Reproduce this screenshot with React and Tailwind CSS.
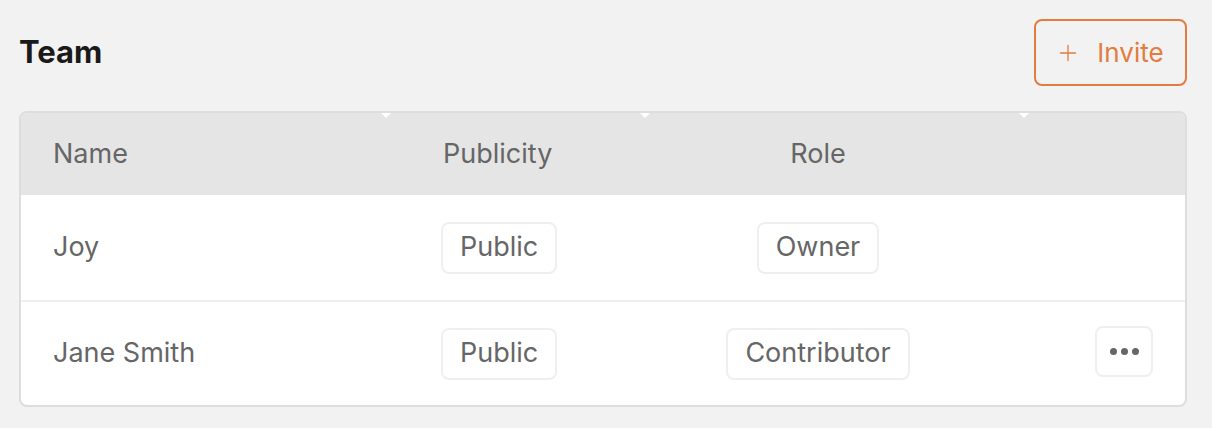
import { Plus } from 'lucide-react';

const members = [
    { name: 'Joy', publicity: 'Public', role: 'Owner', canEdit: false },
    { name: 'Jane Smith', publicity: 'Public', role: 'Contributor', canEdit: true },
];

function Tag({ children }) {
    return (
        <span className="inline-flex h-[52px] items-center rounded-[8px] border-2 border-[#efefef] bg-white px-[17px] text-[27px] text-[#666]">
            {children}
        </span>
    );
}

function ColumnMark({ className }) {
    // little resize notch at the top of the header
    return (
        <span
            className={`absolute top-0 h-0 w-0 border-x-[5px] border-t-[5px] border-x-transparent border-t-white ${className}`}
        />
    );
}

function App() {
    return (
        <div
            className="min-h-screen bg-[#f2f2f2] pl-[19px] pr-[25px] pt-[19px] pb-[20px]"
            style={{ fontFamily: 'Inter, Roboto, "Liberation Sans", sans-serif' }}
        >
            {/* Header */}
            <div className="flex h-[67px] items-center justify-between">
                <h1 className="text-[31px] font-bold text-[#1a1a1a]">Team</h1>
                <button className="flex h-[67px] w-[153px] items-center justify-center gap-[16px] rounded-[8px] border-2 border-[#e27c40] pr-[2px] text-[26px] text-[#e27c40]">
                    <Plus className="h-[26px] w-[26px]" strokeWidth={1.2} />
                    Invite
                </button>
            </div>

            {/* Members table */}
            <div className="mt-[25px] overflow-hidden rounded-[8px] border-2 border-[#dddddd] bg-white">
                <div className="relative flex h-[82px] items-center bg-[#e5e5e5] text-[27px] text-[#666]">
                    <ColumnMark className="left-[360px]" />
                    <ColumnMark className="left-[619px]" />
                    <ColumnMark className="left-[998px]" />
                    <div className="w-[420px] pl-[32px]">Name</div>
                    <div className="w-[252px] pl-[2px]">Publicity</div>
                    <div className="w-[250px] text-center">Role</div>
                </div>
                {members.map((m, i) => (
                    <div
                        key={m.name}
                        className={`flex h-[105px] items-center text-[27px] text-[#666] ${i > 0 ? 'border-t-2 border-[#efefef]' : ''}`}
                    >
                        <div className="w-[420px] pl-[32px]">{m.name}</div>
                        <div className="w-[252px]">
                            <Tag>{m.publicity}</Tag>
                        </div>
                        <div className="flex w-[250px] justify-center">
                            <Tag>{m.role}</Tag>
                        </div>
                        <div className="flex flex-1 justify-end pr-[32px]">
                            {m.canEdit && (
                                <button className="-mt-[4px] flex h-[51px] w-[58px] items-center justify-center gap-[4px] rounded-[8px] border-2 border-[#efefef] bg-white">
                                    <span className="h-[7px] w-[7px] rounded-full bg-[#666]" />
                                    <span className="h-[7px] w-[7px] rounded-full bg-[#666]" />
                                    <span className="h-[7px] w-[7px] rounded-full bg-[#666]" />
                                </button>
                            )}
                        </div>
                    </div>
                ))}
            </div>
        </div>
    );
}

export default App;
